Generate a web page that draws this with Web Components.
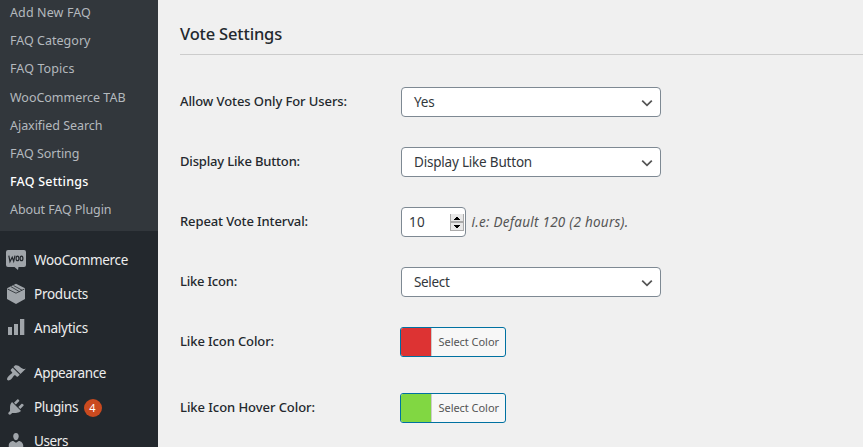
<!DOCTYPE html>
<html lang="en"><head><meta charset="utf-8"><title>Vote Settings</title>
<style>html,body{margin:0;height:447px;overflow:hidden;background:#f0f0f0}</style></head>
<body>
<faq-admin></faq-admin>
<script>
const FONT = '"Noto Sans","Open Sans",sans-serif';
class Base extends HTMLElement {
  connectedCallback() {
    if (this.shadowRoot) return;
    this.attachShadow({mode: 'open'}).innerHTML = this.view();
    if (this.ready) this.ready();
  }
  a(n, d = '') { return this.getAttribute(n) ?? d; }
}

/* A single line of text whose tracking is adjusted to span a given width. */
customElements.define('fit-text', class extends Base {
  view() { return `<style>:host{display:inline-block;white-space:nowrap}span{display:inline-block}</style><span>${this.a('text')}</span>`; }
  ready() {
    const s = this.shadowRoot.querySelector('span');
    const n = this.a('text').length;
    const gap = (Number(this.a('w')) - s.getBoundingClientRect().width) / n;
    s.style.letterSpacing = gap.toFixed(3) + 'px';
  }
});

customElements.define('sub-item', class extends Base {
  view() { const on = this.hasAttribute('current');
    return `<style>:host{display:flex;align-items:center;height:28.2px;padding-left:10px;color:${on ? '#fff' : '#b4b9be'};font-size:12.5px;font-weight:${on ? 500 : 400}}</style>
    <fit-text text="${this.a('text')}" w="${this.a('w')}"></fit-text>`; }
});

const ICONS = {
  woo: '<path d="M2 0h16q2 0 2 2v13q0 2-2 2h-5.500l-.5 3-3.500-3H2q-2 0-2-2V2q0-2 2-2z"/><g fill="none" stroke="#23282d" stroke-width="1.200"><path d="M2.800 5.700l1.200 6L6.200 7.300l1.500 4L9 5.700"/><ellipse cx="11.500" cy="8.400" rx="1.400" ry="2.300"/><ellipse cx="15.500" cy="8.400" rx="1.400" ry="2.300"/></g>',
  box: '<path d="M10 -.3l9 4.600v10.700l-9 5-9-5V4.300z"/><g fill="none" stroke="#23282d" stroke-width=".8"><path d="M1.500 5L10 9.200l8.500-4.200M5 2.700l8.500 5M7.500 1.500L16 6.200"/></g>',
  bars: '<path d="M2 9h4v8H2zM8 6h4v11H8zM14 1h4.300v16H14z"/>',
  brush: '<path d="M14.480 11.060L7.410 3.990l1.500-1.500c.5-.56 2.300-.47 3.510.32 1.210.8 1.430 1.280 2.910 2.100 1.180.64 2.450 1.260 4.450.85zm-.71.71L6.700 4.700 4.930 6.470c-.39.39-.39 1.020 0 1.410l1.060 1.060c.39.39.39 1.030 0 1.420-.6.6-1.430 1.110-2.210 1.690-.35.26-.7.53-1.010.84C1.430 14.230.4 16.080 1.400 17.070c.99 1 2.840-.03 4.180-1.360.31-.31.58-.66.85-1.020.57-.78 1.080-1.610 1.690-2.210.39-.39 1.020-.39 1.410 0l1.060 1.060c.39.39 1.020.39 1.410 0z"/>',
  plug: '<path d="M13.110 4.360L9.870 7.600 8 5.730l3.240-3.240c.35-.34 1.050-.2 1.560.32.52.51.66 1.210.31 1.550zm-8 1.770l.91-1.120 9.010 9.010-1.190.84c-.71.71-2.630 1.160-3.820 1.160H6.140L4.900 17.260c-.59.59-1.540.59-2.120 0-.59-.58-.59-1.530 0-2.120l1.240-1.240v-3.880c0-1.130.4-3.190 1.090-3.890zm7.260 3.970l3.240-3.240c.34-.35 1.040-.21 1.550.31.52.51.66 1.210.31 1.550l-3.240 3.250z"/>',
  user: '<path d="M10 9.250c-2.270 0-2.730-3.440-2.730-3.440C7 4.020 7.820 2 9.970 2c2.160 0 2.980 2.020 2.710 3.810 0 0-.41 3.440-2.680 3.440zm0 2.570L12.720 10c2.390 0 4.520 2.330 4.520 4.530v2.490s-3.650 1.130-7.240 1.130c-3.650 0-7.240-1.130-7.240-1.130v-2.490c0-2.250 1.940-4.480 4.470-4.480z"/>'
};
customElements.define('menu-item', class extends Base {
  view() { return `<style>:host{display:flex;align-items:center;height:34px;padding-left:6px;color:#eee;font-size:13.5px}
    svg{width:20px;height:20px;fill:#a0a5aa;margin-right:8px;margin-top:-1px;overflow:visible;flex:none}fit-text{margin-top:1px}</style>
    <svg viewBox="0 0 20 20">${ICONS[this.a('icon')]}</svg><fit-text text="${this.a('text')}" w="${this.a('w')}"></fit-text><slot></slot>`; }
});
customElements.define('count-badge', class extends Base {
  view() { return `<style>:host{display:flex;align-items:center;justify-content:center;width:18px;height:18px;border-radius:9px;background:#ca4a1f;color:#fff;font-size:11px;margin:1px 0 0 5.500px}</style><slot></slot>`; }
});

customElements.define('side-bar', class extends Base {
  view() {
    const subs = [['Add New FAQ',81],['FAQ Category',80.5],['FAQ Topics',64.5],['WooCommerce TAB',115.5],['Ajaxified Search',92.5],['FAQ Sorting',69.5],['FAQ Settings',78.5,1],['About FAQ Plugin',101.500]];
    return `<style>:host{display:block;background:#23282d;height:447px;overflow:hidden}
      .sub{background:#32373c;height:231px;overflow:hidden}.sub div{margin-top:-1.400px}
      nav{padding-top:12px}.sep{height:11px}</style>
      <div class="sub"><div>${subs.map(s => `<sub-item text="${s[0]}" w="${s[1]}" ${s[2] ? 'current' : ''}></sub-item>`).join('')}</div></div>
      <nav><menu-item icon="woo" text="WooCommerce" w="94"></menu-item><menu-item icon="box" text="Products" w="54"></menu-item><menu-item icon="bars" text="Analytics" w="54"></menu-item>
      <div class="sep"></div><menu-item icon="brush" text="Appearance" w="72"></menu-item><menu-item icon="plug" text="Plugins" w="44"><count-badge>4</count-badge></menu-item><menu-item icon="user" text="Users" w="34"></menu-item></nav>`;
  }
});

customElements.define('form-row', class extends Base {
  view() { return `<style>:host{display:grid;grid-template-columns:221px 1fr;height:30px;align-items:center;color:#23282d;font-size:13px;font-weight:500}
    .f{display:flex;align-items:center;font-weight:400}fit-text{margin-top:-1px}</style>
    <fit-text text="${this.a('label')}" w="${this.a('w')}"></fit-text><div class="f"><slot></slot></div>`; }
});
customElements.define('select-box', class extends Base {
  view() { return `<style>:host{display:flex;box-sizing:border-box;width:260px;height:30px;border:1px solid #7e8993;border-radius:4px;background:#fff;padding:0 7px 0 12px;align-items:center;justify-content:space-between;color:#32373c;font-size:13.5px}
    svg{width:12px;height:8px;fill:none;stroke:#555;stroke-width:1.800;margin-top:1px}</style>
    <fit-text text="${this.a('text')}" w="${this.a('w')}"></fit-text><svg viewBox="0 0 12 8"><path d="M1.200 1.700L6 6.300l4.800-4.600"/></svg>`; }
});
customElements.define('number-box', class extends Base {
  view() { return `<style>:host{display:flex;box-sizing:border-box;width:65px;height:30px;border:1px solid #7e8993;border-radius:4px;background:#fff;padding:0 1px 0 7px;align-items:center;justify-content:space-between;color:#32373c;font-size:13.5px}
    svg{width:14px;height:17px}</style>
    <fit-text text="${this.a('value')}" w="16"></fit-text>
    <svg viewBox="0 0 14 17" shape-rendering="crispEdges"><path fill="#e8e8e8" d="M0 0h14v17H0z"/><path fill="#aaa" d="M0 0h1v17H0zM13 0h1v17h-1zM0 7h14v2H0zM0 16h14v1H0z"/><path d="M6 3h2v1h1v1h1v1H4V5h1V4h1zM4 11h6v1H9v1H8v1H6v-1H5v-1H4z"/></svg>`; }
});
customElements.define('color-button', class extends Base {
  view() { return `<style>:host{display:flex;box-sizing:border-box;width:106px;height:30px;margin-left:-1px;border:1px solid #0071a1;border-radius:3px;background:#f7f7f7;color:#555;font-size:11px;overflow:hidden}
    i{width:30px;background:${this.a('color')};border-right:1px solid #ccc;flex:none}.t{display:flex;align-items:center;padding-left:6.500px}</style>
    <i></i><div class="t"><fit-text text="Select Color" w="60.500"></fit-text></div>`; }
});

customElements.define('settings-panel', class extends Base {
  view() { return `<style>:host{display:block;padding:20px 0 0 22px;color:#23282d}
    header{height:34px;border-bottom:1px solid #ccc;font-size:16.500px;font-weight:500;line-height:28px}
    .rows{display:grid;row-gap:30px;padding-top:32px}.last{margin-top:6px}.hint{font-size:13.5px;font-style:italic;color:#555;margin-left:5.500px}</style>
    <header><fit-text text="Vote Settings" w="102"></fit-text></header>
    <div class="rows">
      <form-row label="Allow Votes Only For Users:" w="167"><select-box text="Yes" w="20.500"></select-box></form-row>
      <form-row label="Display Like Button:" w="120"><select-box text="Display Like Button" w="118"></select-box></form-row>
      <form-row label="Repeat Vote Interval:" w="128"><number-box value="10"></number-box><fit-text class="hint" text="i.e: Default 120 (2 hours)." w="157"></fit-text></form-row>
      <form-row label="Like Icon:" w="57"><select-box text="Select" w="35.500"></select-box></form-row>
      <form-row label="Like Icon Color:" w="94"><color-button color="#dd3333"></color-button></form-row>
      <form-row class="last" label="Like Icon Hover Color:" w="135"><color-button color="#81d742"></color-button></form-row>
    </div>`; }
});
customElements.define('faq-admin', class extends Base {
  view() { return `<style>:host{display:grid;grid-template-columns:158px 1fr;height:447px;font-family:${FONT};line-height:1.4}</style><side-bar></side-bar><settings-panel></settings-panel>`; }
});
</script>
</body></html>
